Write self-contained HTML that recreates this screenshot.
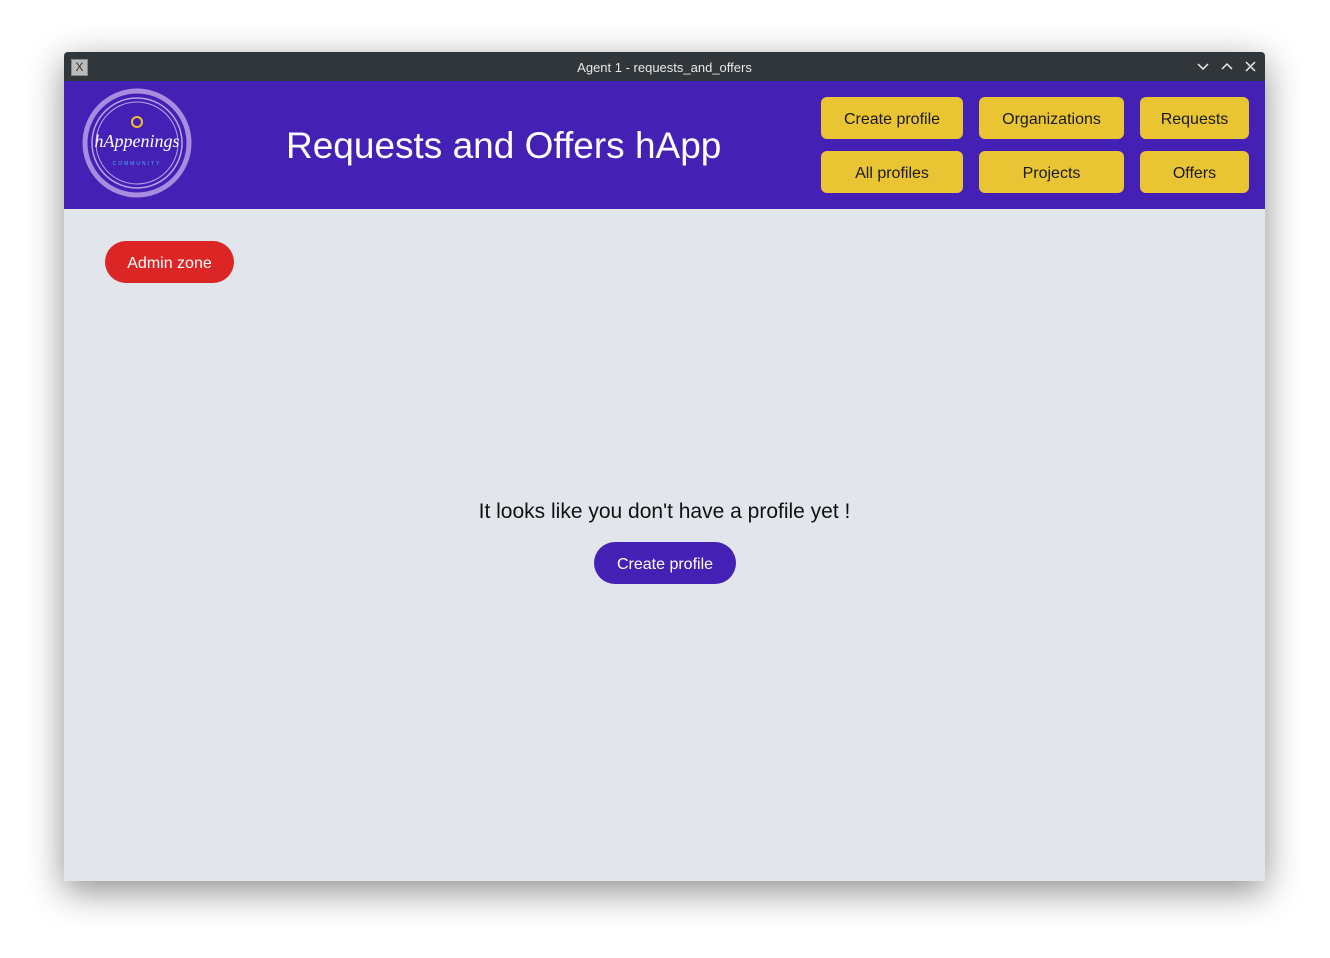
<!DOCTYPE html>
<html><head><style>
body{margin:0;width:1330px;height:958px;background:#fff;font-family:"Liberation Sans","Noto Sans CJK JP",sans-serif;position:relative;overflow:hidden}
.win{position:absolute;left:64px;top:52px;width:1201px;height:829px;box-shadow:0 10px 36px rgba(0,0,0,.45);background:#e3e5ed;border-radius:4px 4px 0 0;overflow:hidden}
.tb{height:29px;background:#31363b;color:#e8e8e8;font-size:13px;text-align:center;line-height:31px;position:relative}
.hd{position:absolute;top:29px;left:0;right:0;height:128px;background:#4520b4}
.b{position:absolute;background:#e9c433;border-radius:6px;color:#1a1a1a;font-size:16px;text-align:center;line-height:46px;height:42px}
.pill{position:absolute;border-radius:21px;color:#fff;font-size:16px;text-align:center;line-height:45px;height:42px}
</style></head><body>
<div class="win">
 <div class="tb">Agent 1 - requests_and_offers
  <div style="position:absolute;left:7px;top:7px;width:15px;height:15px;background:#bbb;border:1px solid #888;font-size:12px;line-height:15px;color:#333">X</div>
  <svg style="position:absolute;right:-6px;top:0" width="80" height="29" stroke="#eee" stroke-width="1.5" fill="none"><path d="M7 12l5 5 5-5"/><path d="M31 17l5-5 5 5"/><path d="M55 10l9 9M64 10l-9 9"/></svg>
 </div>
 <div class="hd">
  <svg style="position:absolute;left:18px;top:6px" width="112" height="112">
   <circle cx="55" cy="56" r="52" fill="none" stroke="#a98be0" stroke-width="5"/>
   <circle cx="55" cy="56" r="45" fill="none" stroke="#b9a3ea" stroke-width="1.5"/>
   <circle cx="55" cy="56" r="41" fill="none" stroke="#b9a3ea" stroke-width="1"/>
   <circle cx="55" cy="35" r="5" fill="none" stroke="#f0c030" stroke-width="2"/>
   <text x="55" y="60" fill="#fff" font-size="18" font-style="italic" text-anchor="middle" font-family="Liberation Serif,serif">hAppenings</text>
   <text x="55" y="78" fill="#4ab0f0" font-size="5" text-anchor="middle" letter-spacing="2">COMMUNITY</text>
  </svg>
  <div style="position:absolute;left:222px;top:44px;color:#fff;font-size:37px">Requests and Offers hApp</div>
  <div class="b" style="left:757px;top:16px;width:142px">Create profile</div>
  <div class="b" style="left:915px;top:16px;width:145px">Organizations</div>
  <div class="b" style="left:1076px;top:16px;width:109px">Requests</div>
  <div class="b" style="left:757px;top:70px;width:142px">All profiles</div>
  <div class="b" style="left:915px;top:70px;width:145px">Projects</div>
  <div class="b" style="left:1076px;top:70px;width:109px">Offers</div>
 </div>
 <div class="pill" style="left:41px;top:189px;width:129px;background:#dc2626">Admin zone</div>
 <div style="position:absolute;left:0;right:0;top:448px;text-align:center;font-size:21px;color:#111">It looks like you don't have a profile yet !</div>
 <div class="pill" style="left:530px;top:490px;width:142px;background:#4520b4">Create profile</div>
</div>
</body></html>
